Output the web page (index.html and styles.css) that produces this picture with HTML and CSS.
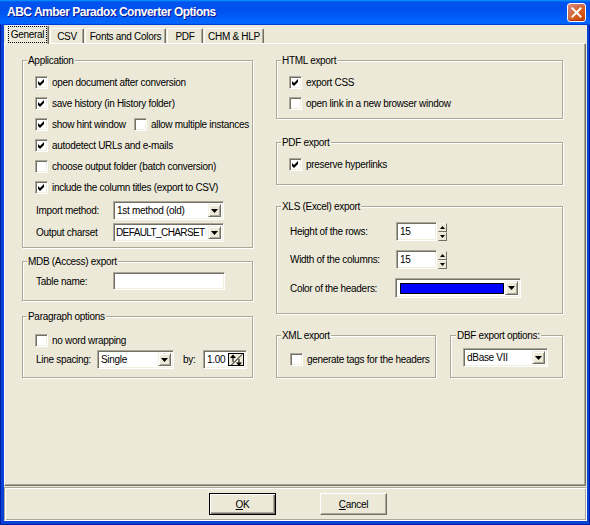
FILE: index.html
```html
<!DOCTYPE html>
<html lang="en">
<head>
<meta charset="utf-8">
<title>ABC Amber Paradox Converter Options</title>
<link rel="stylesheet" href="styles.css">
</head>
<body>
<div class="window">
  <div class="titlebar">
    <span class="title">ABC Amber Paradox Converter Options</span>
    <span class="close"><svg width="11" height="11" viewBox="0 0 11 11"><path d="M1.5 1.5 L9.5 9.5 M9.5 1.5 L1.5 9.5" stroke="#fff" stroke-width="2" stroke-linecap="square"/></svg></span>
  </div>
  <div class="frame">
    <div class="client">
      <div class="tabs">
        <div class="tab active t-general"><span class="focus">General</span></div>
        <div class="tab t-csv">CSV</div>
        <div class="tab t-fonts">Fonts and Colors</div>
        <div class="tab t-pdf">PDF</div>
        <div class="tab t-chm">CHM &amp; HLP</div>
      </div>
      <div class="page">
        <div class="col">
          <fieldset class="grp g-app">
            <legend>Application</legend>
            <div class="gb gb-app">
              <div class="chk"><span class="cb"><svg class="tick" viewBox="0 0 7 7"><polygon points="0,2 2,4 6,0 6,3 2,7 0,5"/></svg></span>open document after conversion</div>
              <div class="chk"><span class="cb"><svg class="tick" viewBox="0 0 7 7"><polygon points="0,2 2,4 6,0 6,3 2,7 0,5"/></svg></span>save history (in History folder)</div>
              <div class="chk"><span class="cb"><svg class="tick" viewBox="0 0 7 7"><polygon points="0,2 2,4 6,0 6,3 2,7 0,5"/></svg></span><span class="hint">show hint window</span><span class="cb"></span>allow multiple instances</div>
              <div class="chk"><span class="cb"><svg class="tick" viewBox="0 0 7 7"><polygon points="0,2 2,4 6,0 6,3 2,7 0,5"/></svg></span>autodetect URLs and e-mails</div>
              <div class="chk"><span class="cb"></span>choose output folder (batch conversion)</div>
              <div class="chk"><span class="cb"><svg class="tick" viewBox="0 0 7 7"><polygon points="0,2 2,4 6,0 6,3 2,7 0,5"/></svg></span>include the column titles (export to CSV)</div>
              <div class="frow fr-first"><span class="lbl">Import method:</span><div class="combo w-import"><span class="val">1st method (old)</span><span class="dd"><svg viewBox="0 0 7 4" width="7" height="4"><polygon points="0,0 7,0 3.5,4"/></svg></span></div></div>
              <div class="frow fr-second"><span class="lbl">Output charset</span><div class="combo w-import"><span class="val val-tight">DEFAULT_CHARSET</span><span class="dd"><svg viewBox="0 0 7 4" width="7" height="4"><polygon points="0,0 7,0 3.5,4"/></svg></span></div></div>
            </div>
          </fieldset>
          <fieldset class="grp g-mdb">
            <legend>MDB (Access) export</legend>
            <div class="gb gb-mdb">
              <div class="frow frow-18"><span class="lbl">Table name:</span><div class="field w-table"></div></div>
            </div>
          </fieldset>
          <fieldset class="grp g-para">
            <legend>Paragraph options</legend>
            <div class="gb gb-para">
              <div class="chk chk-20"><span class="cb"></span>no word wrapping</div>
              <div class="frow"><span class="lbl lbl-ls">Line spacing:</span><div class="combo w-single"><span class="val">Single</span><span class="dd"><svg viewBox="0 0 7 4" width="7" height="4"><polygon points="0,0 7,0 3.5,4"/></svg></span></div><span class="by">by:</span><div class="spin"><span class="val">1.00</span><span class="spinbtn"><svg viewBox="0 0 14 14" width="14" height="14"><path d="M1.5 13 L13 1.5" stroke="#000" stroke-width="1"/><polygon points="1,5 4,1.5 7,5"/><rect x="3.5" y="4" width="1" height="5"/><polygon points="7,9.5 13,9.5 10,13"/><rect x="9.5" y="6" width="1" height="4"/></svg></span></div></div>
            </div>
          </fieldset>
        </div>
        <div class="col">
          <fieldset class="grp g-html">
            <legend>HTML export</legend>
            <div class="gb gb-html">
              <div class="chk"><span class="cb"><svg class="tick" viewBox="0 0 7 7"><polygon points="0,2 2,4 6,0 6,3 2,7 0,5"/></svg></span>export CSS</div>
              <div class="chk"><span class="cb"></span>open link in a new browser window</div>
            </div>
          </fieldset>
          <fieldset class="grp g-pdf">
            <legend>PDF export</legend>
            <div class="gb gb-html">
              <div class="chk"><span class="cb"><svg class="tick" viewBox="0 0 7 7"><polygon points="0,2 2,4 6,0 6,3 2,7 0,5"/></svg></span>preserve hyperlinks</div>
            </div>
          </fieldset>
          <fieldset class="grp g-xls">
            <legend>XLS (Excel) export</legend>
            <div class="gb gb-xls">
              <div class="frow"><span class="lbl lbl-xls">Height of the rows:</span><div class="field w-num"><span class="val">15</span></div><div class="updown"><span class="ud"><svg viewBox="0 0 5 3" width="5" height="3"><polygon points="0,3 5,3 2.5,0"/></svg></span><span class="ud"><svg viewBox="0 0 5 3" width="5" height="3"><polygon points="0,0 5,0 2.5,3"/></svg></span></div></div>
              <div class="frow"><span class="lbl lbl-xls">Width of the columns:</span><div class="field w-num"><span class="val">15</span></div><div class="updown"><span class="ud"><svg viewBox="0 0 5 3" width="5" height="3"><polygon points="0,3 5,3 2.5,0"/></svg></span><span class="ud"><svg viewBox="0 0 5 3" width="5" height="3"><polygon points="0,0 5,0 2.5,3"/></svg></span></div></div>
              <div class="frow frow-20"><span class="lbl lbl-xls lbl-color">Color of the headers:</span><div class="combo w-color"><span class="swatch"></span><span class="dd"><svg viewBox="0 0 7 4" width="7" height="4"><polygon points="0,0 7,0 3.5,4"/></svg></span></div></div>
            </div>
          </fieldset>
          <div class="pair">
            <fieldset class="grp g-xml">
              <legend>XML export</legend>
              <div class="gb gb-xml">
                <div class="chk"><span class="cb"></span>generate tags for the headers</div>
              </div>
            </fieldset>
            <fieldset class="grp g-dbf">
              <legend>DBF export options:</legend>
              <div class="gb gb-dbf">
                <div class="combo w-dbf"><span class="val">dBase VII</span><span class="dd"><svg viewBox="0 0 7 4" width="7" height="4"><polygon points="0,0 7,0 3.5,4"/></svg></span></div>
              </div>
            </fieldset>
          </div>
        </div>
      </div>
      <div class="buttons">
        <span class="btn default"><u>O</u>K</span>
        <span class="btn"><u>C</u>ancel</span>
      </div>
    </div>
  </div>
</div>
</body>
</html>
```
FILE: styles.css
```css
* { box-sizing: border-box; }
html, body { margin: 0; padding: 0; }
body {
  width: 590px; height: 525px; overflow: hidden; background: #fff;
  font-family: "Liberation Sans", Arial, sans-serif; font-size: 10px;
  letter-spacing: -0.3px; line-height: 13px; color: #000;
}
.window { width: 590px; height: 525px; display: flex; flex-direction: column; }
.titlebar {
  height: 25px; flex: none; display: flex; align-items: center; justify-content: space-between;
  padding: 0 4px 0 7px;
  background: linear-gradient(180deg, #0997FF 0%, #0053EE 8%, #0050EE 40%, #0066FF 88%, #0066FF 93%, #005BFF 95%, #003DD7 96%, #003DD7 100%);
}
.title { color: #fff; font-weight: bold; font-size: 12px; letter-spacing: -0.5px; text-shadow: 1px 1px #0F1089; }
.close {
  width: 19px; height: 19px; display: flex; align-items: center; justify-content: center;
  border: 1px solid #fff; border-radius: 3px;
  background: radial-gradient(circle at 90% 90%, #CC4600 0%, #DC6527 55%, #CD7561 70%, #E88F74 100%);
  box-shadow: inset 0 -1px 1px #A32A0A;
}
.frame {
  flex: 1; display: flex; padding: 0 3px 4px 4px;
  background: #0842D6;
  box-shadow: inset 1px 0 #001EA0, inset -1px 0 #001EA0, inset 0 -1px #001EA0;
}
.client { flex: 1; background: #ECE9D8; display: flex; flex-direction: column; }
.tabs { height: 18px; flex: none; display: flex; align-items: flex-end; padding-left: 2px; }
.tab {
  height: 15px; display: flex; align-items: center; justify-content: center;
  border-top: 1px solid #fff; border-left: 1px solid #fff; border-right: 1px solid #716F64;
  border-radius: 2px 2px 0 0; box-shadow: inset -1px 0 #ACA899; margin-left: 1px;
  padding-top: 1px;
}
.tab.active {
  height: 19px; margin-bottom: -1px; margin-left: 0; background: #ECE9D8;
  position: relative; z-index: 2; padding-top: 0; align-items: flex-start;
}
.focus { outline: 1px dotted #000; outline-offset: 0; padding: 1px 2px 1px 2px; margin-top: 1px; line-height: 13px; }
.t-general { width: 43px; }
.t-csv { width: 34px; }
.t-fonts { width: 81px; }
.t-pdf { width: 36px; }
.t-chm { width: 60px; }
.page {
  height: 443px; flex: none; margin-right: 1px;
  border: 1px solid; border-color: #fff #716F64 #716F64 #fff;
  box-shadow: inset -1px -1px #ACA899;
  display: grid; grid-template-columns: 231px 287px; column-gap: 23px;
  padding: 10px 0 0 17px; align-items: start;
}
.col { display: flex; flex-direction: column; }
.grp {
  margin: 0; padding: 0; min-width: 0;
  border: 1px solid #ACA899; box-shadow: inset 1px 1px #fff, 1px 1px #fff;
}
.grp legend { padding: 0 1px; margin-left: 4px; background: #ECE9D8; line-height: 13px; }
.g-app { height: 194px; }
.g-mdb { height: 46px; margin-top: 7px; }
.g-para { height: 68px; margin-top: 9px; }
.g-html { height: 65px; }
.g-pdf { height: 49px; margin-top: 17px; }
.g-xls { height: 114px; margin-top: 15px; }
.pair { display: flex; gap: 14px; margin-top: 15px; }
.g-xml { width: 160px; height: 49px; }
.g-dbf { width: 113px; height: 49px; }
.g-dbf legend { margin-left: 5px; }
.gb { padding-left: 12px; }
.gb-app { padding-top: 5px; }
.gb-mdb { padding-top: 4px; }
.gb-para { padding-top: 7px; }
.gb-html { padding-top: 5px; }
.gb-xls { padding-top: 9px; padding-left: 13px; }
.gb-xml { padding-top: 7px; padding-left: 13px; }
.gb-dbf { padding-top: 6px; }
.chk { display: flex; align-items: center; height: 21px; white-space: nowrap; }
.chk-20 { height: 20px; }
.cb {
  flex: none; width: 13px; height: 13px; margin-right: 4px; background: #fff;
  border: 1px solid; border-color: #ACA899 #fff #fff #ACA899;
  box-shadow: inset 1px 1px #716F64, inset -1px -1px #F1EFE2;
  display: inline-flex; align-items: center; justify-content: center;
}
.tick { width: 7px; height: 7px; display: block; }
.hint { width: 82px; }
.frow { display: flex; align-items: center; height: 19px; white-space: nowrap; }
.frow-18 { height: 18px; }
.frow-20 { height: 20px; }
.fr-first { margin-top: 3px; }
.fr-second { margin-top: 3px; }
.gb-xls .frow + .frow { margin-top: 9px; }
.lbl { width: 78px; padding-left: 1px; flex: none; }
.lbl-ls { width: 62px; }
.lbl-xls { width: 106px; padding-left: 0; }
.lbl-color { width: 105px; }
.field, .combo, .spin {
  height: 100%; background: #fff; display: flex; align-items: center;
  border: 1px solid; border-color: #ACA899 #fff #fff #ACA899;
  box-shadow: inset 1px 1px #716F64, inset -1px -1px #F1EFE2;
  padding: 2px; flex: none;
}
.val { flex: 1; padding-left: 1px; overflow: hidden; white-space: nowrap; }
.val-tight { letter-spacing: -0.6px; padding-left: 0; }
.dd, .spinbtn, .ud {
  background: #ECE9D8; display: flex; align-items: center; justify-content: center;
  border: 1px solid; border-color: #F1EFE2 #716F64 #716F64 #F1EFE2;
  box-shadow: inset 1px 1px #fff, inset -1px -1px #ACA899;
}
.dd { width: 13px; height: 100%; flex: none; }
.w-import { width: 111px; }
.w-table { width: 112px; }
.w-single { width: 77px; }
.w-num { width: 41px; }
.w-color { width: 126px; }
.w-dbf { width: 85px; height: 19px; }
.by { width: 29px; padding-left: 9px; flex: none; }
.spin { width: 44px; }
.spinbtn { width: 16px; height: 100%; flex: none; border-color: #000; box-shadow: none; }
.updown { display: flex; flex-direction: column; height: 18px; margin-left: 1px; }
.ud { width: 9px; height: 9px; border-width: 1px; box-shadow: none; }
.swatch { width: 104px; height: 11px; margin-left: 2px; background: #0000FF; border: 1px solid #000; }
.w-color .dd { margin-left: auto; }
.buttons {
  flex: 1; margin-top: 1px; display: flex; align-items: center; justify-content: center; gap: 44px;
  padding-left: 5px;
  border: 1px solid; border-color: #ACA899 #fff #fff #ACA899;
  box-shadow: inset 1px 1px #fff, inset -1px -1px #ACA899;
}
.btn {
  width: 67px; height: 22px; display: flex; align-items: center; justify-content: center;
  background: #ECE9D8;
  border: 1px solid; border-color: #fff #716F64 #716F64 #fff;
  box-shadow: inset -1px -1px #ACA899;
}
.btn.default { border-color: #000; box-shadow: inset 1px 1px #fff, inset -1px -1px #716F64, inset -2px -2px #ACA899; }
.btn u { text-decoration: underline; }
```
